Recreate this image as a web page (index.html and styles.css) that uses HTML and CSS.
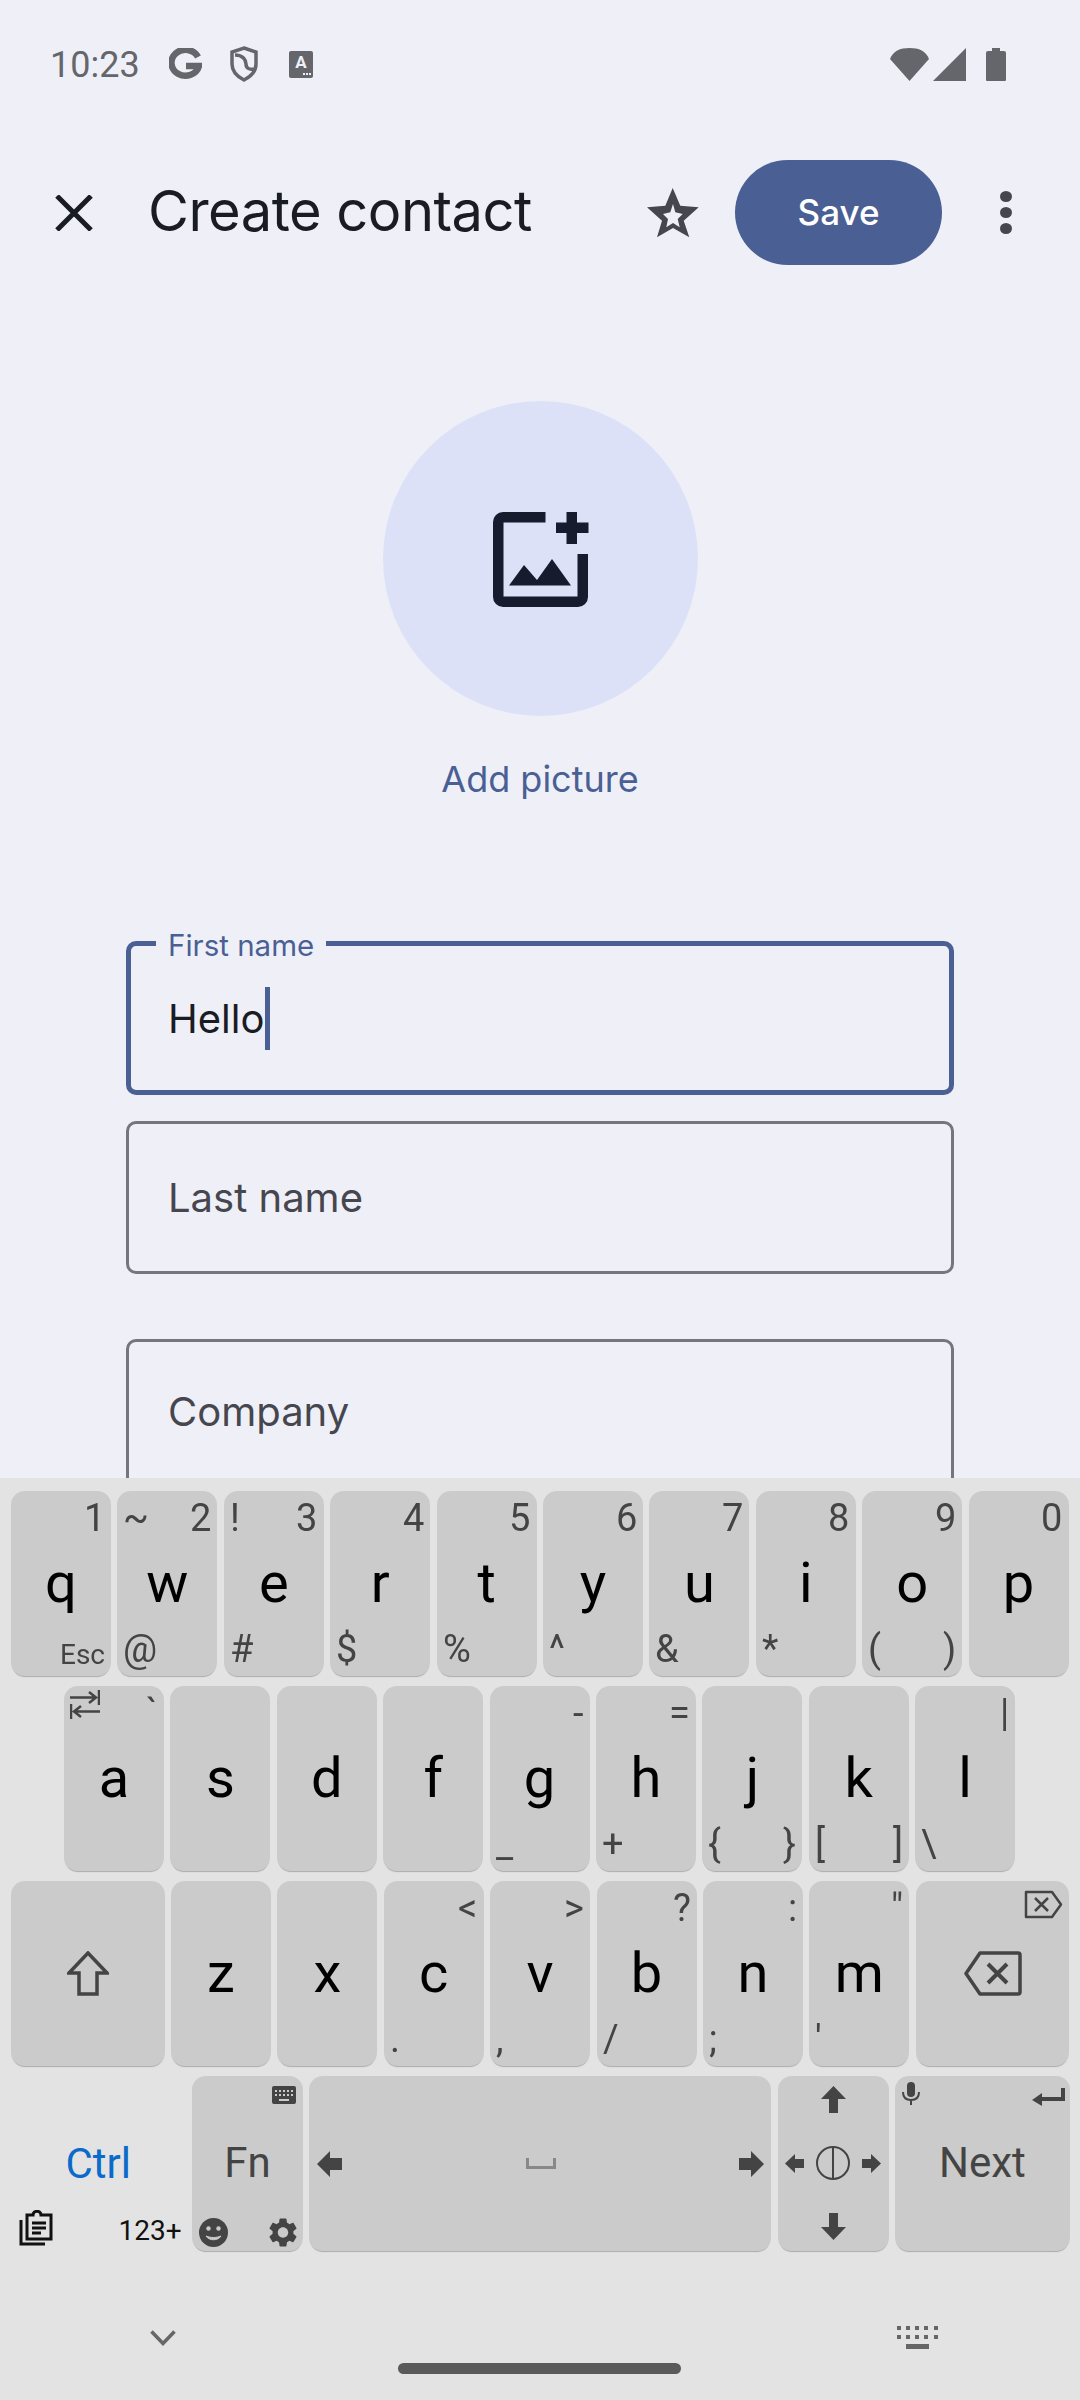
FILE: index.html
```html
<!DOCTYPE html>
<html lang="en">

<head>
  <meta charset="UTF-8">
  <title>Create contact</title>
  <link rel="stylesheet" href="styles.css">
</head>

<body>
  <div class="main">
    <!-- status bar -->
    <div class="status">
      <span class="time">10:23</span>
      <svg class="st-g" width="33" height="32" viewBox="0 0 33 32"><path d="M29 9A14 13 0 1 0 30 18H17" fill="none" stroke="#65666b" stroke-width="6.5"/></svg>
      <svg class="st-shield" width="30" height="36" viewBox="0 0 30 36"><path d="M15 2l12 4v12c0 8-6 13-12 16C9 31 3 26 3 18V6z" fill="none" stroke="#65666b" stroke-width="3.500"/><path d="M6 9c8 0 11 5 11 9s3 6 8 5" fill="none" stroke="#65666b" stroke-width="3.500"/></svg>
      <svg class="st-a" width="24" height="27" viewBox="0 0 24 27"><rect width="24" height="27" rx="2" fill="#65666b"/><text x="12" y="17" text-anchor="middle" class="st-a-text">A</text><path d="M14 22h2v2h-2zM17 22h2v2h-2zM20 22h2v2h-2z" fill="#eff0f7"/></svg>
      <span class="status-fill"></span>
      <svg width="39" height="33" viewBox="0 0 39 33"><path d="M0 11C3 3 10 0 19.500 0S36 3 39 11L19.500 33z" fill="#65666b"/></svg>
      <svg class="st-signal" width="33" height="33" viewBox="0 0 33 33"><path d="M33 0v33H0z" fill="#65666b"/></svg>
      <svg class="st-batt" width="20" height="33" viewBox="0 0 20 33"><path d="M6 0h8v3h4a2 2 0 0 1 2 2v27a1 1 0 0 1-1 1H1a1 1 0 0 1-1-1V5a2 2 0 0 1 2-2h4z" fill="#65666b"/></svg>
    </div>

    <!-- toolbar -->
    <div class="toolbar">
      <svg class="tb-close" width="38" height="36" viewBox="0 0 38 36"><path d="M2 1l34 34M36 1L2 35" fill="none" stroke="#1a1c24" stroke-width="5"/></svg>
      <h1 class="title">Create contact</h1>
      <svg class="tb-star" width="52" height="50" viewBox="0 0 52 50"><path fill-rule="evenodd" d="M25.700 0L33.300 17.700 51.700 19.300 36.700 32.700 42.300 49.300 26 40 10 49.300 15 32.700 0 19.300 18.300 17.700zM26 16L23.300 24.300 16 26 21 31 19.300 39.300 26 35 32.700 39.300 30.700 31 35.700 26 28.300 24.300z" fill="#45464f"/></svg>
      <div class="save">Save</div>
      <div class="more"><i></i><i></i><i></i></div>
    </div>

    <!-- picture -->
    <div class="picture">
      <div class="circle">
        <svg width="96" height="96" viewBox="0 0 96 96">
          <path d="M52.500 0v10.500H10.500v74h74V42H95v43a10 10 0 0 1-10 10H10A10 10 0 0 1 0 85V10A10 10 0 0 1 10 0z" fill="#161b2e"/>
          <path d="M73.500 0h10.500v10.500H95.500v10.500H84V32H73.500V21H63V10.500h10.500z" fill="#161b2e"/>
          <path d="M16 73.500L31 53l13 15 15-21 19 26.500z" fill="#161b2e"/>
        </svg>
      </div>
      <div class="add-picture">Add picture</div>
    </div>

    <!-- fields -->
    <div class="fields">
      <div class="field focused">
        <span class="float-label">First name</span>
        <span class="value">Hello</span><span class="cursor"></span>
      </div>
      <div class="field">
        <span class="hint">Last name</span>
      </div>
      <div class="field company">
        <span class="hint">Company</span>
      </div>
    </div>
  </div>

  <!-- keyboard -->
  <div class="keyboard">
    <div class="row">
      <div class="key">q<span class="tr">1</span><span class="br esc">Esc</span></div>
      <div class="key">w<span class="tl">~</span><span class="tr">2</span><span class="bl">@</span></div>
      <div class="key">e<span class="tl">!</span><span class="tr">3</span><span class="bl">#</span></div>
      <div class="key">r<span class="tr">4</span><span class="bl">$</span></div>
      <div class="key">t<span class="tr">5</span><span class="bl">%</span></div>
      <div class="key">y<span class="tr">6</span><span class="bl">^</span></div>
      <div class="key">u<span class="tr">7</span><span class="bl">&amp;</span></div>
      <div class="key">i<span class="tr">8</span><span class="bl">*</span></div>
      <div class="key">o<span class="tr">9</span><span class="bl">(</span><span class="br">)</span></div>
      <div class="key">p<span class="tr">0</span></div>
    </div>
    <div class="row row-home">
      <div class="key">a
        <svg class="corner-tab" width="30" height="29" viewBox="0 0 30 29"><path d="M0 7.500h25M19 2l7 5.500-7 5.500M29 0v15M30 21.500H5M11 16l-7 5.500 7 5.500M1 14v15" fill="none" stroke="#444" stroke-width="2.500"/></svg>
        <span class="tr">`</span>
      </div>
      <div class="key">s</div>
      <div class="key">d</div>
      <div class="key">f</div>
      <div class="key">g<span class="tr">-</span><span class="bl">_</span></div>
      <div class="key">h<span class="tr">=</span><span class="bl">+</span></div>
      <div class="key">j<span class="bl">{</span><span class="br">}</span></div>
      <div class="key">k<span class="bl">[</span><span class="br">]</span></div>
      <div class="key">l<span class="tr">|</span><span class="bl">\</span></div>
    </div>
    <div class="row">
      <div class="key wide">
        <svg class="mid-icon" width="42" height="45" viewBox="0 0 42 45"><path d="M21 2L2 22h10v21h18V22h10z" fill="none" stroke="#444" stroke-width="3.500"/></svg>
      </div>
      <div class="key">z</div>
      <div class="key">x</div>
      <div class="key">c<span class="tr">&lt;</span><span class="bl">.</span></div>
      <div class="key">v<span class="tr">&gt;</span><span class="bl">,</span></div>
      <div class="key">b<span class="tr">?</span><span class="bl">/</span></div>
      <div class="key">n<span class="tr">:</span><span class="bl">;</span></div>
      <div class="key">m<span class="tr">"</span><span class="bl">'</span></div>
      <div class="key wide">
        <svg class="mid-icon" width="58" height="45" viewBox="0 0 58 45"><path d="M16 2h38a2 2 0 0 1 2 2v37a2 2 0 0 1-2 2H16L2 22.500z" fill="none" stroke="#444" stroke-width="3.500" stroke-linejoin="round"/><path d="M24 13l19 19M43 13L24 32" fill="none" stroke="#444" stroke-width="4"/></svg>
        <svg class="corner-del" width="39" height="29" viewBox="0 0 39 29"><path d="M2 2h26l9 12.500L28 27H2z" fill="none" stroke="#444" stroke-width="2.500" stroke-linejoin="round"/><path d="M11 8l13 13M24 8L11 21" fill="none" stroke="#444" stroke-width="2.500"/></svg>
      </div>
    </div>
    <div class="row row-bottom">
      <div class="ctrl-area">
        <span class="ctrl">Ctrl</span>
        <svg class="clip" width="34" height="36" viewBox="0 0 34 36"><path d="M2 10v24h24" fill="none" stroke="#111" stroke-width="3"/><path d="M8 5h6c0-5 8-5 8 0h10v24H8z" fill="none" stroke="#111" stroke-width="3"/><path d="M13 13h14M13 18h14M13 23h9" stroke="#111" stroke-width="3"/></svg>
        <span class="num-mode">123+</span>
      </div>
      <div class="key key-fn label">Fn
        <svg class="fn-board" width="24" height="18" viewBox="0 0 24 18"><rect width="24" height="18" rx="2" fill="#444"/><path d="M3 4h2v2H3zM7 4h2v2H7zM11 4h2v2h-2zM15 4h2v2h-2zM19 4h2v2h-2zM3 8h2v2H3zM7 8h2v2H7zM11 8h2v2h-2zM15 8h2v2h-2zM19 8h2v2h-2zM7 13h10v2H7z" fill="#cbcbcb"/></svg>
        <svg class="fn-emoji" width="29" height="29" viewBox="0 0 29 29"><circle cx="14.500" cy="14.500" r="14.500" fill="#444"/><circle cx="9.500" cy="10.500" r="2.200" fill="#cbcbcb"/><circle cx="19.500" cy="10.500" r="2.200" fill="#cbcbcb"/><path d="M7 18c3 5 12 5 15 0-5 2-10 2-15 0z" fill="#cbcbcb" stroke="#cbcbcb"/></svg>
        <svg class="fn-gear" width="28" height="29" viewBox="2.500 2 19 20"><path d="M19.140 12.940c.04-.3.060-.61.060-.94 0-.32-.02-.64-.07-.94l2.030-1.580c.18-.14.230-.41.120-.61l-1.920-3.320c-.12-.22-.37-.29-.59-.22l-2.390.96c-.5-.38-1.030-.7-1.620-.94l-.36-2.540c-.04-.24-.24-.41-.48-.41h-3.840c-.24 0-.43.170-.47.410l-.36 2.540c-.59.240-1.130.57-1.620.94l-2.390-.96c-.22-.08-.47 0-.59.220L2.740 8.870c-.12.210-.08.470.12.610l2.030 1.580c-.05.300-.09.630-.09.940s.02.640.07.940l-2.030 1.580c-.18.140-.23.410-.12.610l1.920 3.320c.12.220.37.290.59.220l2.390-.96c.5.380 1.030.7 1.620.94l.36 2.540c.05.240.24.410.48.410h3.840c.24 0 .44-.17.470-.41l.36-2.540c.59-.24 1.130-.56 1.620-.94l2.390.96c.22.080.47 0 .59-.22l1.920-3.320c.12-.22.070-.47-.12-.61l-2.010-1.580zM12 15.600c-1.980 0-3.600-1.620-3.600-3.600s1.620-3.600 3.600-3.600 3.600 1.620 3.600 3.600-1.620 3.600-3.600 3.600z" fill="#444"/></svg>
      </div>
      <div class="key key-space">
        <svg width="25" height="26" viewBox="0 0 25 26"><path d="M0 13L13 0v7h12v12H13v7z" fill="#444"/></svg>
        <svg width="30" height="11" viewBox="0 0 30 11"><path d="M1.500 0v9.500h27V0" fill="none" stroke="#888" stroke-width="3"/></svg>
        <svg width="25" height="26" viewBox="0 0 25 26"><path d="M25 13L12 0v7H0v12h12v7z" fill="#444"/></svg>
      </div>
      <div class="key key-arrows">
        <svg class="arr-up" width="25" height="27" viewBox="0 0 25 27"><path d="M12.500 0L25 13h-8v14H8V13H0z" fill="#444"/></svg>
        <div class="arr-mid">
          <svg width="19" height="19" viewBox="0 0 19 19"><path d="M0 9.500L10 0v5h9v9h-9v5z" fill="#444"/></svg>
          <svg width="34" height="34" viewBox="0 0 34 34"><circle cx="17" cy="17" r="16" fill="none" stroke="#444" stroke-width="2"/><path d="M17 1v32" stroke="#444" stroke-width="2"/></svg>
          <svg width="19" height="19" viewBox="0 0 19 19"><path d="M19 9.500L9 0v5H0v9h9v5z" fill="#444"/></svg>
        </div>
        <svg class="arr-down" width="25" height="27" viewBox="0 0 25 27"><path d="M12.500 27L25 14h-8V0H8v14H0z" fill="#444"/></svg>
      </div>
      <div class="key key-next label">Next
        <svg class="next-mic" width="18" height="23" viewBox="0 0 18 23"><rect x="5" width="8" height="15" rx="4" fill="#444"/><path d="M1 10c0 5 3 8 8 8s8-3 8-8M9 18v5" fill="none" stroke="#444" stroke-width="2"/></svg>
        <svg class="next-enter" width="33" height="19" viewBox="0 0 33 19"><path d="M31 0v11H9" fill="none" stroke="#444" stroke-width="4"/><path d="M0 12l10-7v13z" fill="#444"/></svg>
      </div>
    </div>
    <div class="nav">
      <svg class="nav-down" width="26" height="16" viewBox="0 0 26 16"><path d="M1.500 1.500L13 13.500 24.500 1.500" fill="none" stroke="#666" stroke-width="3.500"/></svg>
      <div class="nav-pill"></div>
      <svg class="nav-board" width="41" height="23" viewBox="0 0 41 23"><path d="M0 0h4v4H0zM9 0h4v4H9zM18 0h4v4h-4zM27 0h4v4h-4zM37 0h4v4h-4zM0 9h4v4H0zM9 9h4v4H9zM18 9h4v4h-4zM27 9h4v4h-4zM37 9h4v4h-4zM9 18h23v5H9z" fill="#666"/></svg>
    </div>
  </div>
</body>

</html>
```

FILE: styles.css
```css
body {
  margin: 0;
  padding: 0;
  width: 1080px;
  height: 2400px;
  overflow: hidden;
  background-color: #EFF0F7;
  font-family: Roboto, sans-serif;
}

.main {
  height: 1478px;
  overflow: hidden;
}

/* status bar */
.status {
  display: flex;
  align-items: center;
  height: 128px;
  padding: 0 74px 0 50px;
  box-sizing: border-box;
}

.time {
  position: relative;
  top: 1px;
  font-size: 36px;
  color: #65666B;
  margin-right: 29px;
}

.st-shield {
  margin-left: 27px;
}

.st-a {
  margin-left: 30px;
}

.st-a-text {
  font-family: Roboto, sans-serif;
  font-size: 17px;
  font-weight: 700;
  fill: #EFF0F7;
}

.status-fill {
  flex: 1;
}

.st-signal {
  margin-left: 4px;
}

.st-batt {
  margin-left: 20px;
}

/* toolbar */
.toolbar {
  display: flex;
  align-items: center;
  height: 105px;
  margin-top: 32px;
  padding-left: 55px;
}

.title {
  margin: -3px 0 0 55px;
  width: 499px;
  font-family: Inter, sans-serif;
  font-size: 56px;
  font-weight: 400;
  letter-spacing: -0.5px;
  color: #1A1C24;
}

.save {
  width: 207px;
  height: 105px;
  margin-left: 36px;
  border-radius: 53px;
  background-color: #4A5F94;
  color: #FFF;
  font-family: Inter, sans-serif;
  font-size: 35px;
  font-weight: 500;
  line-height: 105px;
  text-align: center;
}

.more {
  margin: -5px 0 0 58px;
}

.more i {
  display: block;
  width: 12px;
  height: 11px;
  margin-top: 5px;
  border-radius: 50%;
  background-color: #45464F;
}

/* picture */
.picture {
  margin-top: 136px;
  text-align: center;
}

.circle {
  display: flex;
  align-items: center;
  justify-content: center;
  width: 315px;
  height: 315px;
  margin: 0 auto;
  padding: 2px 0 0 1px;
  box-sizing: border-box;
  border-radius: 50%;
  background-color: #DDE1F8;
}

.add-picture {
  margin-top: 40px;
  font-family: Inter, sans-serif;
  font-size: 36px;
  font-weight: 420;
  line-height: 46px;
  color: #4A5F94;
}

/* fields */
.fields {
  margin: 139px 126px 0;
  font-family: Inter, sans-serif;
}

.field {
  position: relative;
  display: flex;
  align-items: center;
  height: 153px;
  margin-bottom: 26px;
  padding-left: 39px;
  box-sizing: border-box;
  border: 3px solid #74757D;
  border-radius: 10px;
  font-size: 40px;
}

.field.focused {
  height: 154px;
  padding-left: 37px;
  border: 5px solid #4A5F94;
}

.field.company {
  margin-top: 65px;
  padding-bottom: 9px;
}

.float-label {
  position: absolute;
  left: 25px;
  top: -19px;
  padding: 0 12px;
  background-color: #EFF0F7;
  font-size: 29.500px;
  line-height: 36px;
  color: #4A5F94;
}

.value {
  color: #1A1C24;
}

.cursor {
  width: 5px;
  height: 63px;
  margin-left: 1px;
  background-color: #4A5F94;
}

.hint {
  color: #46464F;
}

/* keyboard */
.keyboard {
  height: 922px;
  padding-top: 13px;
  box-sizing: border-box;
  background-color: #E3E3E3;
}

.row {
  display: flex;
  gap: 6.4px;
  height: 185px;
  margin-bottom: 10px;
  padding-left: 11px;
}

.row-home {
  padding-left: 64px;
}

.row-bottom {
  height: 175px;
  margin-bottom: 0;
}

.key {
  position: relative;
  flex: none;
  width: 100px;
  padding-top: 64px;
  box-sizing: border-box;
  border-radius: 14px;
  background-color: #CBCBCB;
  box-shadow: 0 2px 1px -1px #ABABAB;
  font-size: 56px;
  line-height: 56px;
  text-align: center;
  color: #000;
}

.key.wide {
  width: 153.600px;
}

.key .tl,
.key .tr,
.key .bl,
.key .br {
  position: absolute;
  font-size: 38px;
  line-height: 38px;
  color: #444;
  will-change: transform;
}

.tl {
  top: 8px;
  left: 6px;
}

.tr {
  top: 8px;
  right: 6px;
}

.bl {
  bottom: 8px;
  left: 6px;
}

.br {
  bottom: 8px;
  right: 6px;
}

.key .esc {
  bottom: 2px;
  font-size: 28px;
}

.mid-icon {
  position: absolute;
  top: 70px;
  left: 50%;
  transform: translateX(-50%);
}

.corner-tab {
  position: absolute;
  top: 4px;
  left: 6px;
}

.corner-del {
  position: absolute;
  top: 9px;
  right: 6px;
}

/* bottom row */
.ctrl-area {
  position: relative;
  width: 174.600px;
}

.ctrl {
  display: block;
  margin-top: 67px;
  font-size: 42px;
  line-height: 42px;
  text-align: center;
  color: #0B6BCB;
}

.clip {
  position: absolute;
  left: 8px;
  bottom: 5px;
}

.num-mode {
  position: absolute;
  right: 4px;
  bottom: 6px;
  font-size: 28px;
  line-height: 28px;
  color: #111;
}

.key.label {
  padding-top: 66px;
  font-size: 42px;
  line-height: 42px;
  color: #444;
}

.key-fn {
  width: 111px;
}

.fn-board {
  position: absolute;
  top: 10px;
  right: 7px;
}

.fn-emoji {
  position: absolute;
  left: 7px;
  bottom: 4px;
}

.fn-gear {
  position: absolute;
  right: 6px;
  bottom: 4px;
}

.key-space {
  display: flex;
  align-items: center;
  justify-content: space-between;
  width: 462px;
  padding: 0 7px 0 8px;
}

.key-arrows {
  display: flex;
  flex-direction: column;
  align-items: center;
  justify-content: space-between;
  width: 111px;
  padding: 10px 0 11px;
}

.arr-mid {
  display: flex;
  align-items: center;
  gap: 12px;
}

.key-next {
  width: 174.600px;
}

.next-mic {
  position: absolute;
  top: 6px;
  left: 7px;
}

.next-enter {
  position: absolute;
  top: 12px;
  right: 5px;
}

/* nav bar */
.nav {
  position: relative;
  height: 136px;
}

.nav-down {
  position: absolute;
  left: 150px;
  top: 79px;
}

.nav-pill {
  position: absolute;
  left: 398px;
  top: 112px;
  width: 283px;
  height: 11px;
  border-radius: 6px;
  background-color: #5A5A5A;
}

.nav-board {
  position: absolute;
  left: 897px;
  top: 75px;
}
```
